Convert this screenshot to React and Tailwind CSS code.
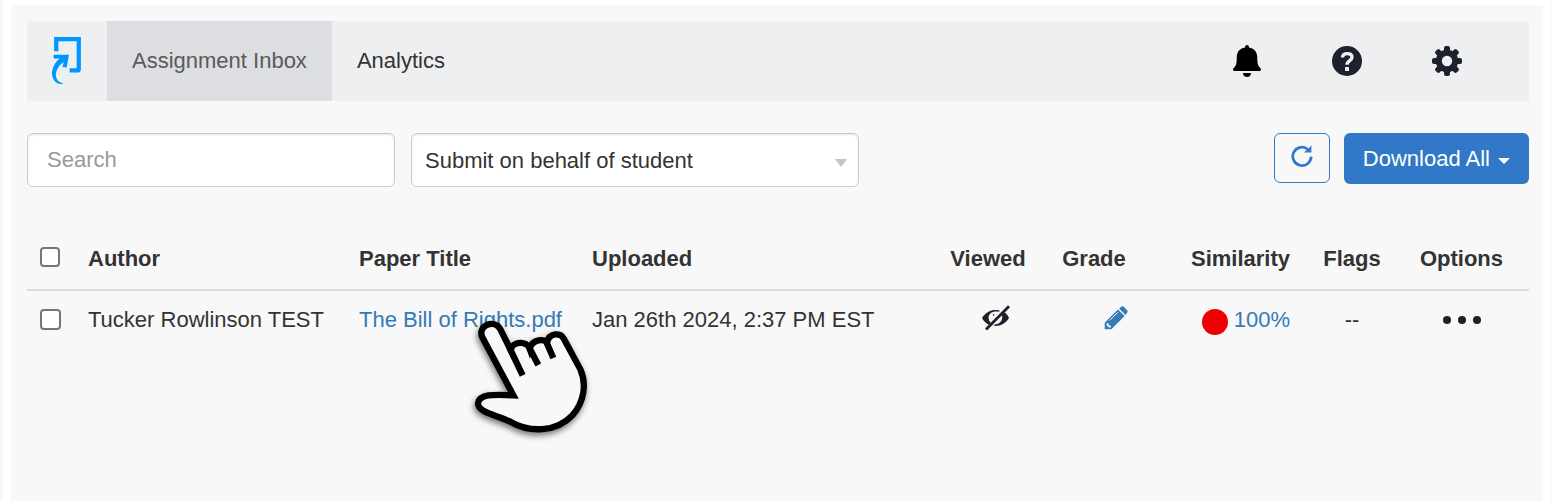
import { useState } from 'react';

const papers = [
  {
    id: 1,
    author: 'Tucker Rowlinson TEST',
    title: 'The Bill of Rights.pdf',
    uploaded: 'Jan 26th 2024, 2:37 PM EST',
    similarity: '100%',
    flags: '--',
  },
];

const Logo = () => (
  <svg viewBox="62 33 98 152" className="h-[50px] w-8" aria-hidden="true">
    <path d="M78 79V42H147V134Q147 138 143 138H119" fill="none" stroke="#0096ff" strokeWidth="13" />
    <path
      d="M70 90H117L110 129L97 127L101 111C84 124 76 140 77 154C79 168 87 175 98 176V179C79 182 66 168 65 148C65 130 74 113 88 101H70Z"
      fill="#0096ff"
    />
  </svg>
);

const BellIcon = () => (
  <svg viewBox="0 0 28 32" className="h-8 w-7" aria-hidden="true">
    <path
      d="M14 0C15.3 0 16 .9 16 2.4C21 3.2 24 6.6 24.2 11.5L24.4 16.5C24.6 19.8 25.6 21.4 27.2 22.8C28.4 24 28.2 26 26.8 26H1.2C-.2 26-.4 24 .8 22.8C2.4 21.4 3.4 19.8 3.6 16.5L3.8 11.5C4 6.6 7 3.2 12 2.4C12 .9 12.7 0 14 0Z"
      fill="#000"
    />
    <path d="M10 28H18C18 30.5 16.4 32 14 32S10 30.5 10 28Z" fill="#000" />
  </svg>
);

const HelpIcon = () => (
  <svg viewBox="0 0 30 30" className="size-[30px]" aria-hidden="true">
    <circle cx="15" cy="15" r="15" fill="#1e212b" />
    <path
      d="M10.5 11.5C10.7 8.6 12.4 7.6 15.2 7.6C18.1 7.6 20 8.9 20 11.3C20 14.8 15 14.4 15 18.8"
      fill="none"
      stroke="#eeeff1"
      strokeWidth="3.4"
    />
    <rect x="13" y="21" width="4" height="4" fill="#eeeff1" />
  </svg>
);

const GearIcon = () => (
  <svg viewBox="-15 -15 30 30" className="size-[30px]" aria-hidden="true">
    <g fill="#1e212b">
      {[0, 45, 90, 135].map((angle) => (
        <rect key={angle} x="-3" y="-15" width="6" height="30" rx="2" transform={`rotate(${angle})`} />
      ))}
      <circle r="11.2" />
    </g>
    <circle r="5.2" fill="#eeeff1" />
  </svg>
);

const RefreshIcon = () => (
  <svg viewBox="0 0 22 22" className="size-[22px]" aria-hidden="true">
    <path d="M20.2 11.6A9.2 9.2 0 1 1 17 4.4" fill="none" stroke="#3178c8" strokeWidth="2.7" />
    <path d="M20.4 0V7.4H13L15.4 5.2L18.6 2.4Z" fill="#3178c8" />
  </svg>
);

const HiddenIcon = () => (
  <svg viewBox="0 0 28 26" className="h-[26px] w-7" aria-hidden="true">
    <path
      d="M0 13C3.5 7.4 8.5 5 13.5 5C15.5 5 17 5.3 18 5.8L16.8 6.8C10.6 5.6 6.6 8.6 6.6 12.6C6.6 15 7.6 16.8 9 18L7.2 20C4.3 18.6 2 16.6 0 13Z"
      fill="#1e212b"
    />
    <path
      d="M22.5 7.2C24.5 8.6 26 10.5 27 13C23.7 18.4 18.8 20.9 13.8 20.9L11.6 20.6L12.8 19.5C17.5 19.2 20.6 15.9 20.2 11.2L19.6 10Z"
      fill="#1e212b"
    />
    <path d="M4 24.5L27 1.3" stroke="#1e212b" strokeWidth="2.8" />
    <path d="M11 10.5L12 9.5" stroke="#1e212b" strokeWidth="1.2" />
  </svg>
);

const PencilIcon = () => (
  <svg viewBox="0 0 24 24" className="size-6" aria-hidden="true">
    <path d="M14 3.4L20.6 10L7.4 23.2H.7V16.7Z" fill="#337ab7" />
    <path d="M15.1 2.5L17.2 .7Q18.6-.2 20 1L23 4Q24.2 5.5 23.1 6.8L21.5 8.9Z" fill="#337ab7" />
    <path d="M5.5 14.5L13.9 6.3" stroke="#f8f8f8" strokeWidth="1" />
    <path d="M2.9 17L4.4 17.2L4.9 19.2L6.8 19.7L7 21.2L5 21.5L2.5 19Z" fill="#f8f8f8" />
  </svg>
);

const HandPointer = () => (
  <svg
    viewBox="90 80 390 390"
    className="pointer-events-none absolute top-3 left-28 size-[130px] drop-shadow-[-1px_3px_3px_rgba(0,0,0,0.55)]"
    aria-hidden="true"
  >
    <path
      d="M217 318L124 144C108 110 160 87 178 120L209 182C215 155 257 153 266 178C275 148 312 148 318 160C324 130 360 128 369 149L418 240C438 284 429 340 394 378C345 430 265 430 208 397C165 376 111 370 111 342C114 315 155 314 217 318Z"
      fill="#f8f8f8"
      stroke="#000"
      strokeWidth="19"
    />
    <path
      d="M205 174L245 258M264 174L292 227M315 156L337 206"
      fill="none"
      stroke="#000"
      strokeWidth="19"
    />
  </svg>
);

const App = () => {
  const [search, setSearch] = useState('');
  const [selected, setSelected] = useState([]);

  const toggle = (id) => {
    setSelected(selected.includes(id) ? selected.filter((item) => item !== id) : [...selected, id]);
  };

  const toggleAll = () => {
    setSelected(selected.length === papers.length ? [] : papers.map((paper) => paper.id));
  };

  return (
    <div className="min-h-screen bg-[#f8f8f8] pr-px pl-[3px] font-['Liberation_Sans',Arial,sans-serif] text-[22px] leading-8 text-[#333]">
      <div className="flex min-h-screen bg-white px-2 pt-[5px]">
        <main className="min-w-0 flex-1 bg-[#f8f8f8] py-4 pr-[14px] pl-4">
          {/* Top navigation */}
          <header className="flex h-20 items-stretch bg-[#eeeff1]">
            <a href="#home" aria-label="Home" className="flex w-20 items-center justify-center">
              <Logo />
            </a>
            <nav className="flex">
              <a href="#inbox" className="flex items-center bg-[#dddee2] px-[25px] text-[#5a5a5a]">
                Assignment Inbox
              </a>
              <a href="#analytics" className="flex items-center px-[25px] text-[#333]">
                Analytics
              </a>
            </nav>
            <div className="ml-auto flex pr-8">
              <button aria-label="Notifications" className="flex w-[100px] items-center justify-center">
                <BellIcon />
              </button>
              <button aria-label="Help" className="flex w-[100px] items-center justify-center">
                <HelpIcon />
              </button>
              <button aria-label="Settings" className="flex w-[100px] items-center justify-center">
                <GearIcon />
              </button>
            </div>
          </header>

          {/* Search and actions */}
          <div className="mt-8 flex items-start gap-4">
            <input
              type="text"
              aria-label="Search"
              placeholder="Search"
              value={search}
              onChange={(e) => setSearch(e.target.value)}
              className="h-[54px] w-[368px] rounded-md border border-[#ccc] bg-white px-[19px] shadow-[inset_0_1px_2px_rgba(0,0,0,0.1)] placeholder:text-[#999]"
            />
            <div className="relative w-[448px]">
              <select
                aria-label="Submit on behalf of student"
                className="block h-[54px] w-full appearance-none rounded-md border border-[#ccc] bg-white px-[13px] pt-[2px] shadow-[inset_0_1px_2px_rgba(0,0,0,0.1)]"
              >
                <option>Submit on behalf of student</option>
              </select>
              <svg
                viewBox="0 0 12 8"
                className="pointer-events-none absolute top-[26px] right-3 h-2 w-3"
                aria-hidden="true"
              >
                <path d="M0 0H12L6 8Z" fill="#c4c4c4" />
              </svg>
            </div>
            <div className="ml-auto flex items-start gap-[14px]">
              <button
                aria-label="Refresh"
                className="flex h-[50px] w-14 items-center justify-center rounded-md border border-[#3178c8] bg-[#f8f8f8] pb-1"
              >
                <RefreshIcon />
              </button>
              <button className="flex h-[51px] items-center gap-2 rounded-md bg-[#3178c8] px-[19px] text-white">
                Download All
                <svg viewBox="0 0 12 6" className="mt-1 h-[6px] w-3" aria-hidden="true">
                  <path d="M0 0H12L6 6Z" fill="#fff" />
                </svg>
              </button>
            </div>
          </div>

          {/* Papers */}
          <table className="mt-[42px] w-full table-fixed border-collapse">
            <thead>
              <tr className="h-[61px] border-b-2 border-[#ddd] text-left">
                <th className="w-[53px] pl-[13px]">
                  <input
                    type="checkbox"
                    aria-label="Select all papers"
                    checked={selected.length === papers.length}
                    onChange={toggleAll}
                    className="mb-1 block size-5 appearance-none rounded border-2 border-[#767676] bg-white checked:bg-[#3178c8]"
                  />
                </th>
                <th className="w-[271px] px-2">Author</th>
                <th className="w-[233px] px-2">Paper Title</th>
                <th className="px-2">Uploaded</th>
                <th className="w-[100px] text-center">Viewed</th>
                <th className="w-[112px] text-center">Grade</th>
                <th className="w-[152px] pr-3 text-right">Similarity</th>
                <th className="w-[100px] text-center">Flags</th>
                <th className="w-[127px] pr-2 text-center">Options</th>
              </tr>
            </thead>
            <tbody>
              {papers.map((paper) => (
                <tr key={paper.id} className="h-[58px]">
                  <td className="pl-[13px]">
                    <input
                      type="checkbox"
                      aria-label={`Select ${paper.title}`}
                      checked={selected.includes(paper.id)}
                      onChange={() => toggle(paper.id)}
                      className="block size-[21px] appearance-none rounded border-2 border-[#767676] bg-white checked:bg-[#3178c8]"
                    />
                  </td>
                  <td className="px-2">{paper.author}</td>
                  <td className="px-2">
                    <div className="relative">
                      <a href="#paper" className="whitespace-nowrap text-[#337ab7]">
                        {paper.title}
                      </a>
                      <HandPointer />
                    </div>
                  </td>
                  <td className="px-2">{paper.uploaded}</td>
                  <td>
                    <div className="flex justify-center pb-1 pl-4">
                      <HiddenIcon />
                    </div>
                  </td>
                  <td>
                    <a href="#grade" aria-label="Grade paper" className="flex justify-end pr-[22px] pb-1">
                      <PencilIcon />
                    </a>
                  </td>
                  <td className="pr-3">
                    <a href="#similarity" className="flex items-center justify-end gap-[6px] text-[#337ab7]">
                      <span className="mt-1 size-[26px] rounded-full bg-[#ee0000]" />
                      {paper.similarity}
                    </a>
                  </td>
                  <td className="text-center">{paper.flags}</td>
                  <td className="pr-2">
                    <button aria-label="Options" className="mx-auto flex gap-[7px] py-3">
                      <span className="size-2 rounded-full bg-[#1e212b]" />
                      <span className="size-2 rounded-full bg-[#1e212b]" />
                      <span className="size-2 rounded-full bg-[#1e212b]" />
                    </button>
                  </td>
                </tr>
              ))}
            </tbody>
          </table>
        </main>
      </div>
    </div>
  );
};

export default App;
